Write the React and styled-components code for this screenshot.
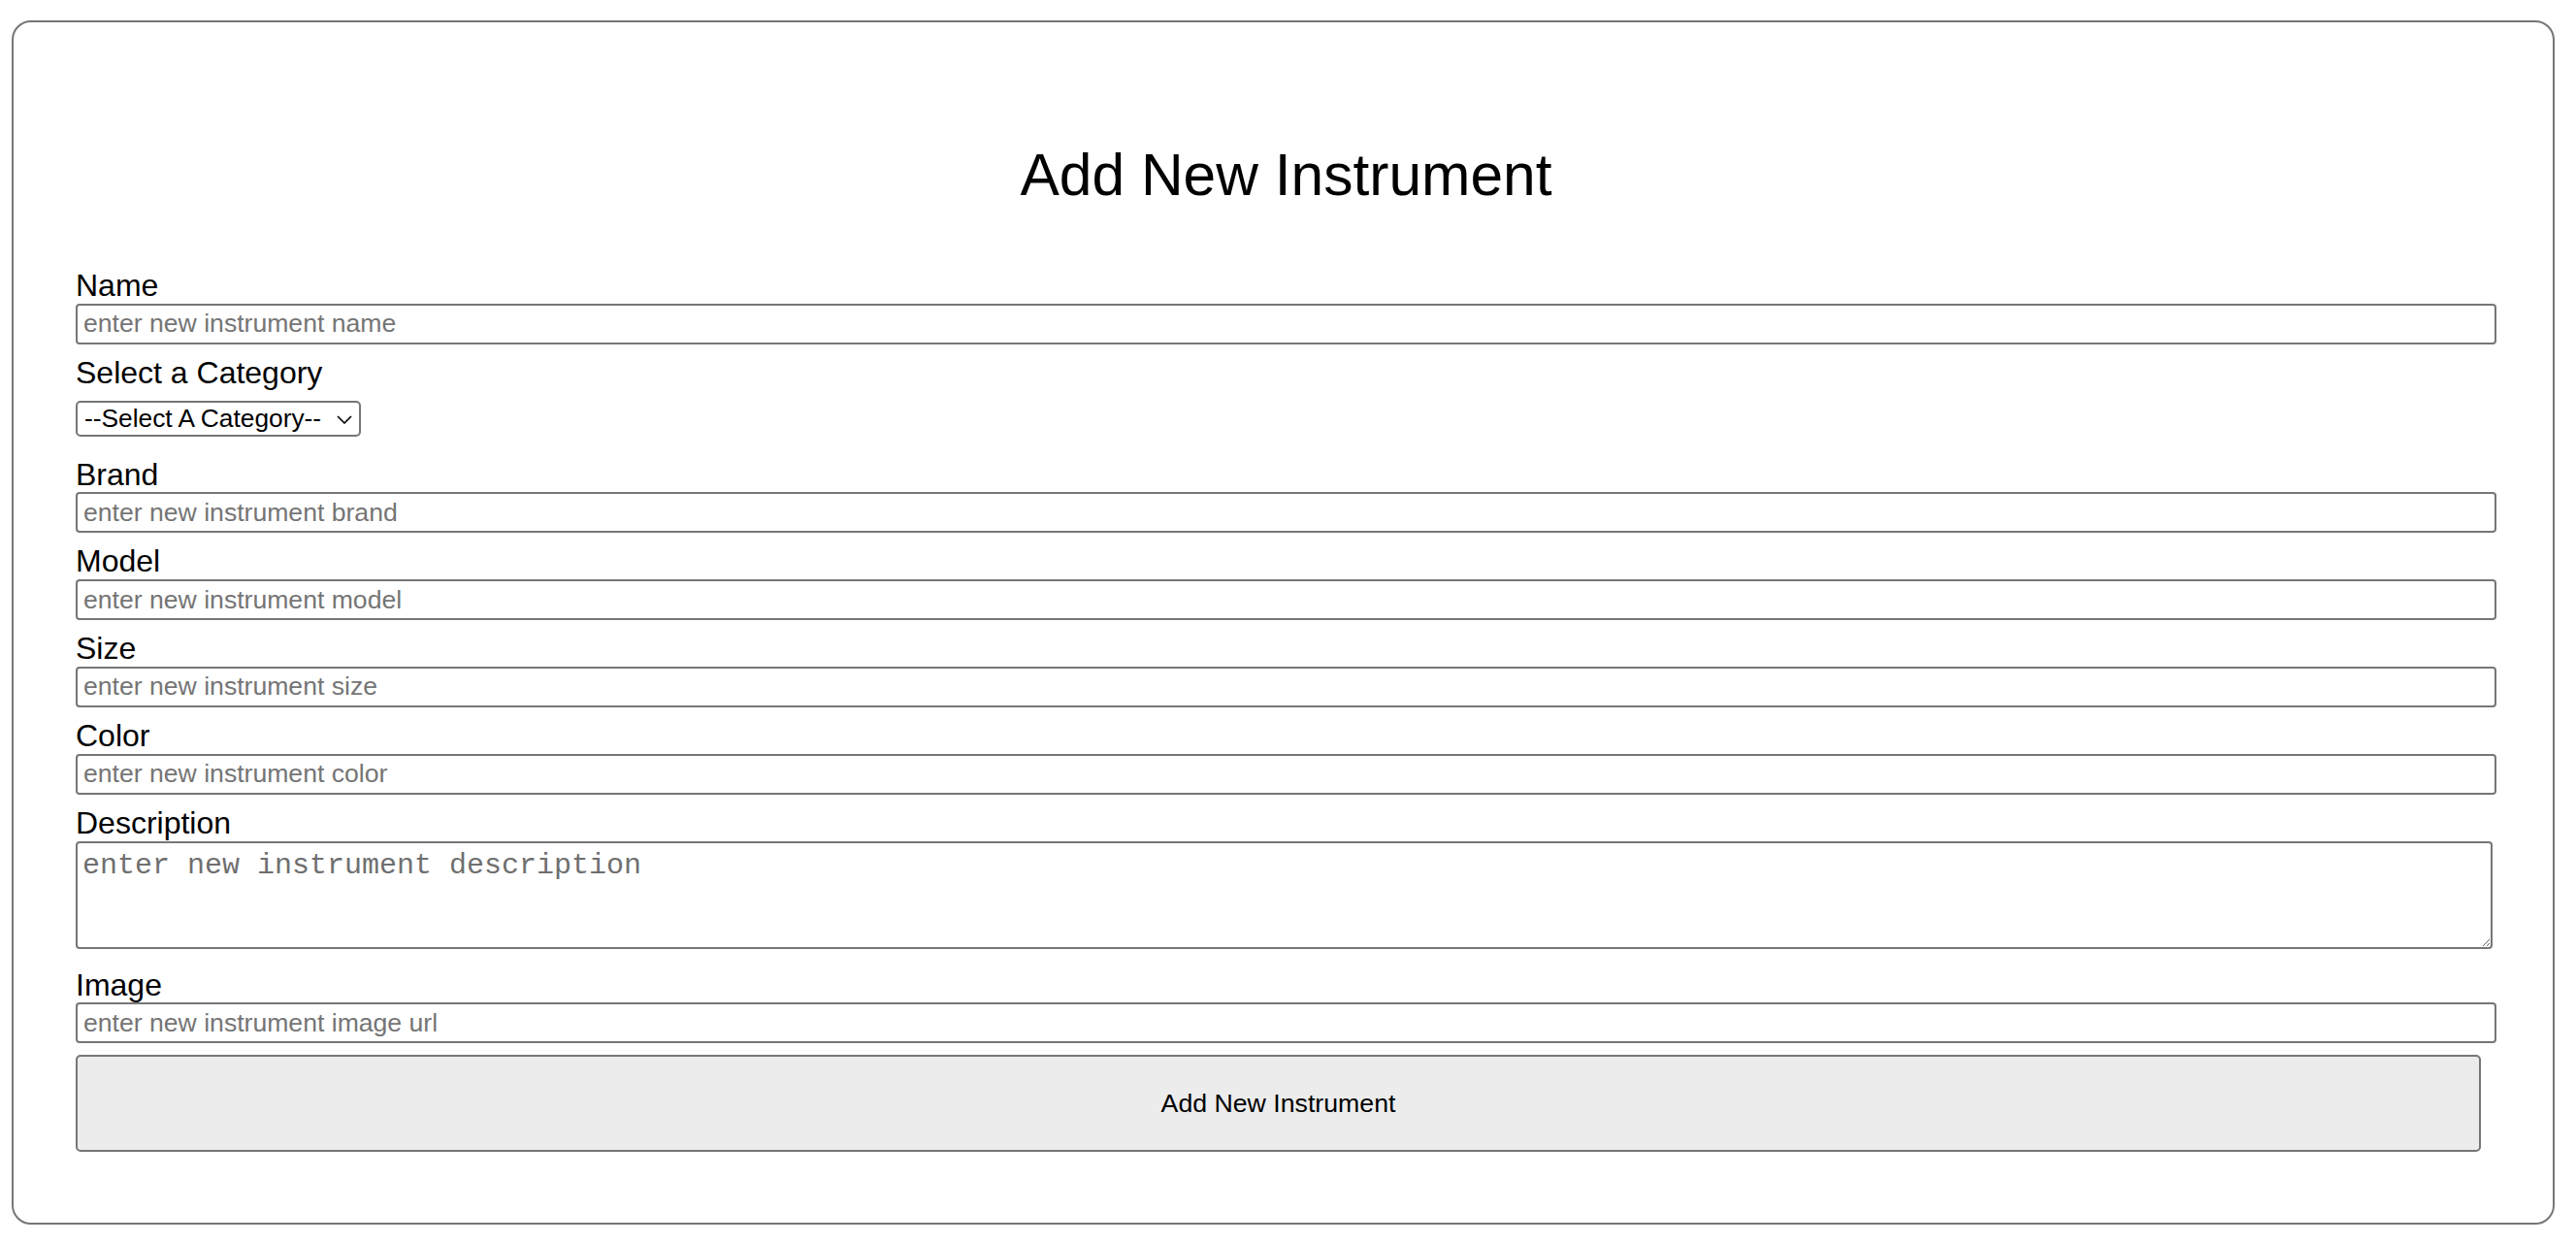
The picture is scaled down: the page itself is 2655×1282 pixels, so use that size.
import React from "react"
import styled, { createGlobalStyle } from "styled-components"

const GlobalStyle = createGlobalStyle`
  html, body {
    margin: 0;
    padding: 0;
    background: #fff;
  }
  body {
    font-family: "Liberation Sans", Arial, Helvetica, sans-serif;
    color: #000;
  }
  * {
    box-sizing: border-box;
  }
`

const Page = styled.div`
  padding: 21px 22px 19px 12px;
`

const Card = styled.div`
  border: 2px solid #767676;
  border-radius: 20px;
  padding: 123px 58px 73px 64px;
`

const Title = styled.h1`
  margin: 0 0 61px;
  font-size: 60.5px;
  line-height: 69px;
  font-weight: normal;
  text-align: center;
`

const Form = styled.form`
  display: flex;
  flex-direction: column;
  align-items: flex-start;
`

const Label = styled.label`
  display: block;
  font-size: 32px;
  line-height: 36.8px;
`

const TextInput = styled.input`
  display: block;
  width: 100%;
  height: 42px;
  margin: 0 0 11px;
  padding: 2px 6px;
  border: 2px solid #767676;
  border-radius: 4px;
  font-family: "Liberation Sans", Arial, sans-serif;
  font-size: 26.6px;
  color: #000;
  background: #fff;

  &::placeholder {
    color: #757575;
  }
`

const SelectWrap = styled.div`
  position: relative;
  margin: 10px 0 21px;
`

const Select = styled.select`
  appearance: none;
  -webkit-appearance: none;
  width: 294px;
  height: 37px;
  padding: 0 34px 0 7px;
  border: 2px solid #767676;
  border-radius: 5px;
  background: #fff;
  font-family: "Liberation Sans", Arial, sans-serif;
  font-size: 26.3px;
  color: #000;
`

const Chevron = styled.svg`
  position: absolute;
  right: 9px;
  top: 15px;
  width: 16px;
  height: 9px;
  pointer-events: none;
`

const TextArea = styled.textarea`
  display: block;
  width: calc(100% - 4px);
  height: 111px;
  margin: 0 0 19px;
  padding: 6px 5px;
  border: 2px solid #767676;
  border-radius: 4px;
  font-family: "Liberation Mono", "Courier New", monospace;
  font-size: 30px;
  line-height: 34px;

  &::placeholder {
    color: #6f6f6f;
  }
`

const SubmitButton = styled.button`
  width: calc(100% - 16px);
  height: 100px;
  margin-top: 1px;
  border: 2px solid #767676;
  border-radius: 5px;
  background: #ececec;
  font-family: "Liberation Sans", Arial, sans-serif;
  font-size: 26.7px;
  color: #000;
`

const fields = [
  { name: "brand", label: "Brand" },
  { name: "model", label: "Model" },
  { name: "size", label: "Size" },
  { name: "color", label: "Color" },
]

export default function App() {
  return (
    <Page>
      <GlobalStyle />
      <Card>
        <Title>Add New Instrument</Title>
        <Form onSubmit={(e) => e.preventDefault()}>
          <Label htmlFor="name">Name</Label>
          <TextInput id="name" placeholder="enter new instrument name" />

          <Label htmlFor="category">Select a Category</Label>
          <SelectWrap>
            <Select id="category" defaultValue="">
              <option value="">--Select A Category--</option>
            </Select>
            <Chevron viewBox="0 0 16 9">
              <path d="M1 1l7 7 7-7" fill="none" stroke="#000" strokeWidth="1.6" />
            </Chevron>
          </SelectWrap>

          {fields.map((f) => (
            <React.Fragment key={f.name}>
              <Label htmlFor={f.name}>{f.label}</Label>
              <TextInput id={f.name} placeholder={`enter new instrument ${f.name}`} />
            </React.Fragment>
          ))}

          <Label htmlFor="description">Description</Label>
          <TextArea id="description" placeholder="enter new instrument description" />

          <Label htmlFor="image">Image</Label>
          <TextInput id="image" placeholder="enter new instrument image url" />

          <SubmitButton type="submit">Add New Instrument</SubmitButton>
        </Form>
      </Card>
    </Page>
  )
}
